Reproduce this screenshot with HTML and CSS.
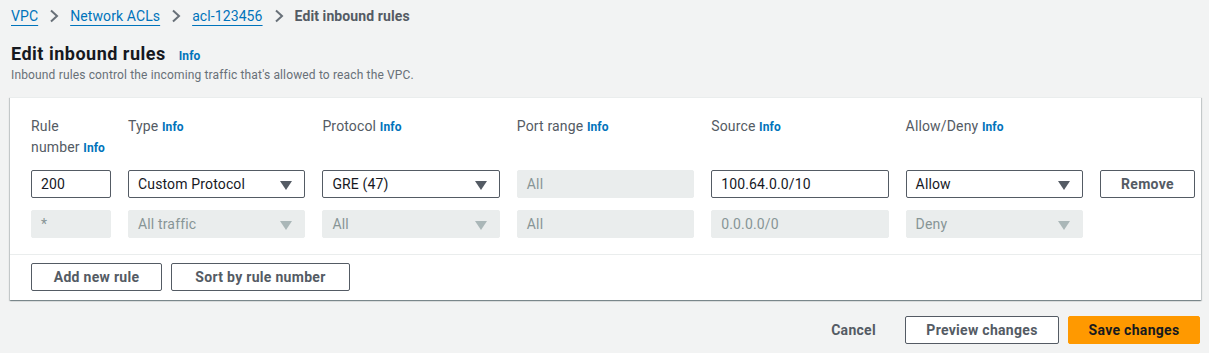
FILE: index.html
```html
<!DOCTYPE html>
<html>
<head>
<meta charset="utf-8">
<link rel="stylesheet" href="styles.css">
</head>
<body>
<nav class="crumbs">
  <a class="crumb-link">VPC</a>
  <svg class="chev" viewBox="0 0 10 14" width="10" height="14"><path d="M2 1.5 L8 7 L2 12.5" fill="none" stroke="#687078" stroke-width="2"/></svg>
  <a class="crumb-link">Network ACLs</a>
  <svg class="chev" viewBox="0 0 10 14" width="10" height="14"><path d="M2 1.5 L8 7 L2 12.5" fill="none" stroke="#687078" stroke-width="2"/></svg>
  <a class="crumb-link">acl-123456</a>
  <svg class="chev" viewBox="0 0 10 14" width="10" height="14"><path d="M2 1.5 L8 7 L2 12.5" fill="none" stroke="#687078" stroke-width="2"/></svg>
  <span class="crumb-current">Edit inbound rules</span>
</nav>

<header class="page-head">
  <h1 class="title">Edit inbound rules <span class="info info-title">Info</span></h1>
  <p class="desc">Inbound rules control the incoming traffic that's allowed to reach the VPC.</p>
</header>

<section class="panel">
  <div class="rules">
    <div class="lbl">Rule<br>number <span class="info">Info</span></div>
    <div class="lbl">Type <span class="info">Info</span></div>
    <div class="lbl">Protocol <span class="info">Info</span></div>
    <div class="lbl">Port range <span class="info">Info</span></div>
    <div class="lbl">Source <span class="info">Info</span></div>
    <div class="lbl">Allow/Deny <span class="info">Info</span></div>
    <div></div>

    <div class="field">200</div>
    <div class="field select">Custom Protocol<span class="caret"></span></div>
    <div class="field select">GRE (47)<span class="caret"></span></div>
    <div class="field disabled">All</div>
    <div class="field">100.64.0.0/10</div>
    <div class="field select">Allow<span class="caret"></span></div>
    <button class="btn">Remove</button>

    <div class="field disabled">*</div>
    <div class="field select disabled">All traffic<span class="caret"></span></div>
    <div class="field select disabled">All<span class="caret"></span></div>
    <div class="field disabled">All</div>
    <div class="field disabled">0.0.0.0/0</div>
    <div class="field select disabled">Deny<span class="caret"></span></div>
    <div></div>
  </div>
  <div class="panel-foot">
    <button class="btn btn-add">Add new rule</button>
    <button class="btn btn-sort">Sort by rule number</button>
  </div>
</section>

<footer class="actions">
  <button class="link-btn">Cancel</button>
  <button class="btn btn-preview">Preview changes</button>
  <button class="btn btn-primary">Save changes</button>
</footer>
</body>
</html>
```

FILE: styles.css
```css
* { box-sizing: border-box; }
html, body { margin: 0; }
body {
  background: #f2f3f3;
  font-family: Roboto, "Open Sans", sans-serif;
  color: #16191f;
  font-size: 14px;
  letter-spacing: 0.15px;
  width: 1209px;
  height: 353px;
  overflow: hidden;
}

.crumbs {
  display: flex;
  align-items: center;
  gap: 12px;
  padding: 4px 11px 0;
  height: 27px;
  font-size: 14px;
  line-height: 20px;
  letter-spacing: 0.1px;
}
.crumb-link {
  color: #0073bb;
  text-decoration: underline;
  text-underline-offset: 4px;
}
.chev { flex: none; margin: 0 -1px; }
.crumb-current { color: #545b64; font-weight: 700; }

.page-head { padding: 16px 11px 0; }
.title {
  margin: 0;
  font-size: 18px;
  line-height: 22px;
  font-weight: 700;
  letter-spacing: 0.5px;
  color: #16191f;
}
.info {
  color: #0073bb;
  font-size: 12px;
  font-weight: 700;
  letter-spacing: 0.1px;
}
.info-title { margin-left: 8px; }
.desc {
  margin: 0;
  font-size: 12px;
  line-height: 16px;
  color: #687078;
}

.panel {
  margin: 14px 8px 0 10px;
  background: #fff;
  border-top: 1px solid #eaeded;
  box-shadow: 0 1px 1px 0 rgba(0,28,36,.3), 1px 1px 1px 0 rgba(0,28,36,.15), -1px 1px 1px 0 rgba(0,28,36,.15);
}
.rules {
  display: grid;
  grid-template-columns: 80px repeat(5, 1fr) 95px;
  column-gap: 17px;
  row-gap: 12px;
  padding: 18px 6px 16px 21px;
  align-items: start;
}
.lbl {
  font-size: 14px;
  line-height: 21px;
  color: #545b64;
  margin-bottom: -1px;
}
.field {
  height: 28px;
  border: 1px solid #545b64;
  border-radius: 2px;
  padding: 0 9px;
  display: flex;
  align-items: center;
  font-size: 14px;
  color: #16191f;
  position: relative;
}
.field.disabled {
  background: #eaeded;
  border-color: #eaeded;
  color: #879596;
}
.caret {
  position: absolute;
  right: 12px;
  top: 10px;
  width: 0;
  height: 0;
  border-left: 6px solid transparent;
  border-right: 6px solid transparent;
  border-top: 9px solid #545b64;
}
.disabled .caret { border-top-color: #aab7b8; }

.btn {
  height: 28px;
  border: 1px solid #545b64;
  border-radius: 2px;
  background: #fff;
  color: #545b64;
  font-family: inherit;
  font-size: 14px;
  font-weight: 700;
  letter-spacing: 0.3px;
  padding: 0 20px;
  cursor: pointer;
}
.panel-foot {
  border-top: 1px solid #eaeded;
  padding: 8px 20px 9px 21px;
  display: flex;
  gap: 9px;
}
.btn-add { width: 131px; padding: 0; }
.btn-sort { width: 179px; padding: 0; }

.actions {
  display: flex;
  justify-content: flex-end;
  align-items: center;
  padding: 16px 9px 0 0;
}
.link-btn {
  background: none;
  border: none;
  font-family: inherit;
  font-size: 14px;
  font-weight: 700;
  letter-spacing: 0.3px;
  color: #545b64;
  margin-right: 29px;
  padding: 0;
}
.btn-preview { width: 154px; padding: 0; margin-right: 9px; }
.btn-primary {
  width: 132px;
  padding: 0;
  background: #ff9900;
  border-color: #ff9900;
  color: #16191f;
}
```
